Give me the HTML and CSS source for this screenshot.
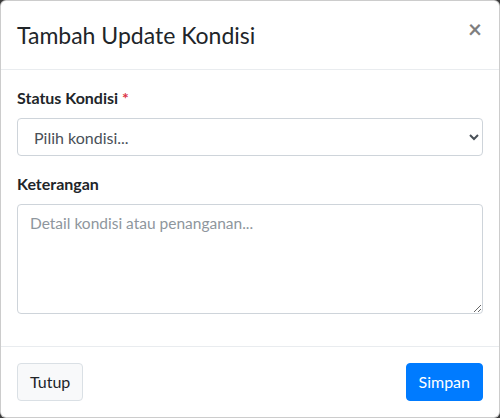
FILE: index.html
```html
<!DOCTYPE html>
<html lang="id">
<head>
    <meta charset="UTF-8">
    <meta name="viewport" content="width=device-width, initial-scale=1.0">
    <title>Tambah Update Kondisi</title>
    <link rel="stylesheet" href="styles.css">
</head>
<body>
    <div class="modal-content">
        <div class="modal-header">
            <h4 class="modal-title">Tambah Update Kondisi</h4>
            <button type="button" class="close">&times;</button>
        </div>
        <div class="modal-body">
            <div class="form-group">
                <label for="status">Status Kondisi <span class="required">*</span></label>
                <select id="status" class="form-control">
                    <option>Pilih kondisi...</option>
                    <option>Baik</option>
                    <option>Rusak Ringan</option>
                    <option>Rusak Berat</option>
                </select>
            </div>
            <div class="form-group">
                <label for="keterangan">Keterangan</label>
                <textarea id="keterangan" class="form-control" placeholder="Detail kondisi atau penanganan..."></textarea>
            </div>
        </div>
        <div class="modal-footer">
            <button type="button" class="btn btn-light">Tutup</button>
            <button type="button" class="btn btn-primary">Simpan</button>
        </div>
    </div>
</body>
</html>
```

FILE: styles.css
```css
body {
    margin: 0;
    background-color: #3b3b3b;
    font-family: Lato, "Open Sans", sans-serif;
    color: #212529;
}

.modal-content {
    box-sizing: border-box;
    width: 500px;
    background-color: #fff;
    border: 1px solid rgba(0, 0, 0, 0.2);
    border-radius: 6px;
}

.modal-header {
    display: flex;
    align-items: flex-start;
    justify-content: space-between;
    padding: 16px;
    border-bottom: 1px solid #e9ecef;
}

.modal-title {
    margin: 0;
    font-size: 23px;
    font-weight: 400;
    line-height: 36px;
}

.close {
    background: none;
    border: 0;
    padding: 0;
    margin: 0 1px 0 0;
    font-family: Lato, sans-serif;
    font-size: 24px;
    font-weight: 700;
    line-height: 1;
    color: #000;
    opacity: 0.5;
    cursor: pointer;
}

.modal-body {
    padding: 16px;
}

.form-group {
    margin-bottom: 16px;
}

label {
    display: inline-block;
    margin-bottom: 8px;
    font-size: 16px;
    font-weight: 700;
    line-height: 24px;
}

.required {
    color: #dc3545;
}

.form-control {
    display: block;
    width: 100%;
    box-sizing: border-box;
    padding: 6px 12px;
    font-family: Lato, sans-serif;
    font-size: 16px;
    line-height: 24px;
    color: #495057;
    background-color: #fff;
    border: 1px solid #ced4da;
    border-radius: 4px;
}

select.form-control {
    height: 38px;
}

textarea.form-control {
    height: 110px;
    resize: vertical;
    font-size: 15.5px;
}

textarea::placeholder {
    color: #8e969d;
}

.modal-footer {
    display: flex;
    justify-content: space-between;
    padding: 16px;
    border-top: 1px solid #e9ecef;
}

.btn {
    height: 38px;
    padding: 6px 12px;
    font-family: Lato, sans-serif;
    font-size: 16px;
    line-height: 24px;
    border: 1px solid transparent;
    border-radius: 4px;
    cursor: pointer;
}

.btn-light {
    color: #212529;
    background-color: #f8f9fa;
    border-color: #dae0e5;
}

.btn-primary {
    color: #fff;
    background-color: #007bff;
    border-color: #007bff;
}
```
